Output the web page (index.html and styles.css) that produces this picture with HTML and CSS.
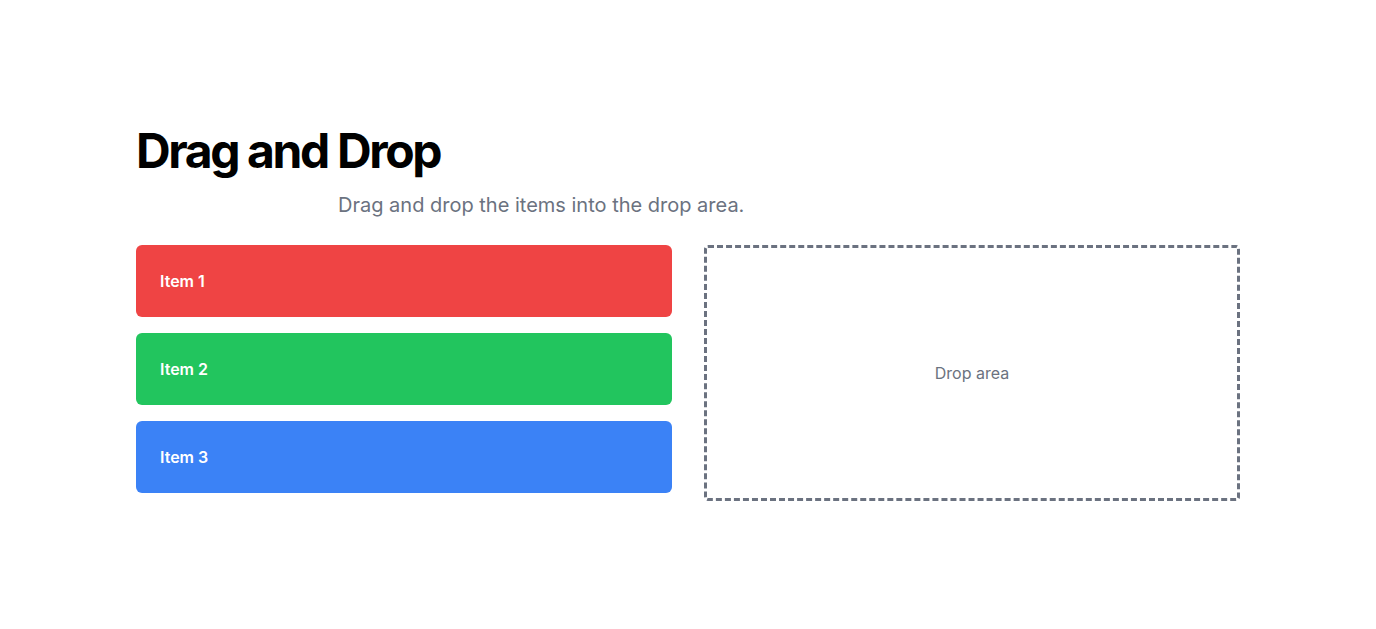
FILE: index.html
```html
<!DOCTYPE html>
<html lang="en">
<head>
<meta charset="utf-8">
<title>Drag and Drop</title>
<link rel="stylesheet" href="styles.css">
</head>
<body>
<main class="page">
  <h1 class="title">Drag and Drop</h1>
  <p class="subtitle">Drag and drop the items into the drop area.</p>
  <div class="grid">
    <div class="items">
      <div class="item item-red">Item 1</div>
      <div class="item item-green">Item 2</div>
      <div class="item item-blue">Item 3</div>
    </div>
    <div class="drop">Drop area</div>
  </div>
</main>
</body>
</html>
```

FILE: styles.css
```css
* { box-sizing: border-box; }
html, body { margin: 0; padding: 0; background: #fff; }
body { font-family: Inter, "Noto Sans", sans-serif; color: #111; }
.page {
  width: 1104px;
  margin: 0 auto;
  padding-top: 121px;
}
.title {
  margin: 0;
  font-size: 48px;
  line-height: 60px;
  font-weight: 700;
  letter-spacing: -0.05em;
  color: #000;
}
.subtitle {
  margin: 10px 0 0 202px;
  font-size: 20px;
  line-height: 28px;
  color: #6b7280;
}
.grid {
  display: grid;
  grid-template-columns: 1fr 1fr;
  gap: 32px;
  margin-top: 26px;
}
.items {
  display: flex;
  flex-direction: column;
  gap: 16px;
}
.item {
  height: 72px;
  border-radius: 6px;
  padding: 24px;
  color: #fff;
  font-weight: 600;
  font-size: 16px;
  line-height: 24px;
}
.item-red { background: #ef4444; }
.item-green { background: #22c55e; }
.item-blue { background: #3b82f6; }
.drop {
  height: 256px;
  border: 3px dashed #6b7280;
  border-radius: 4px;
  display: flex;
  align-items: center;
  justify-content: center;
  font-size: 16px;
  color: #6b7280;
}
```
